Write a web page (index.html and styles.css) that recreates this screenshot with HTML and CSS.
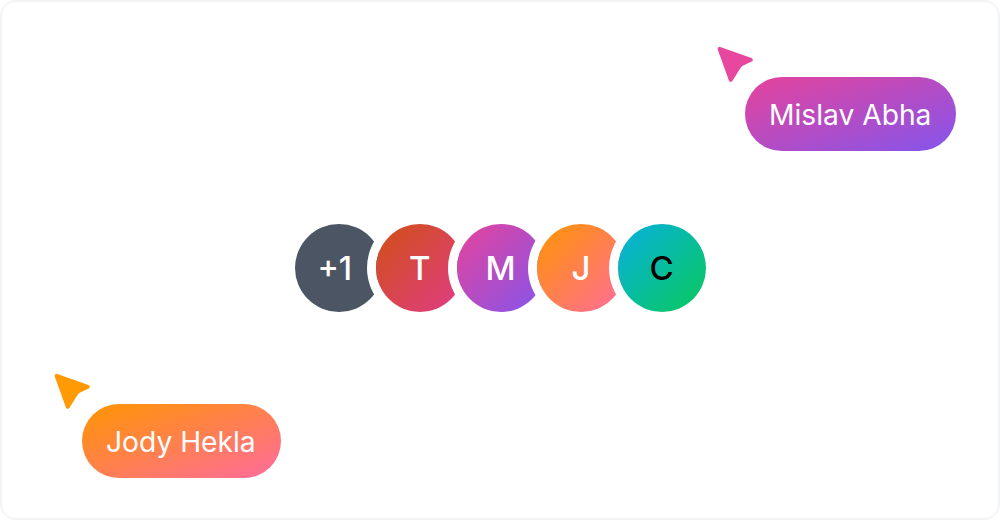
FILE: index.html
```html
<!DOCTYPE html>
<html lang="en">
<head>
  <meta charset="UTF-8" />
  <meta name="viewport" content="width=device-width, initial-scale=1.0"/>
  <title>Avatar Stack</title>
  <link rel="stylesheet" href="styles.css">
</head>
<body>
  <div class="card">
    <div class="avatars">
      <div class="avatar slate">+1</div>
      <div class="avatar red">T</div>
      <div class="avatar purple">M</div>
      <div class="avatar orange">J</div>
      <div class="avatar teal">C</div>
    </div>

    <!-- Live cursors -->
    <div class="cursor cursor-mislav">
      <svg class="pointer pointer-pink" viewBox="0 0 38 38" width="38" height="38">
        <path d="M3.6 3.8 L34.8 14.8 L26.5 18.6 Q23.6 20.2 22 23.2 L14.8 34.8 Z" />
      </svg>
      <div class="pill purple">Mislav Abha</div>
    </div>

    <div class="cursor cursor-jody">
      <svg class="pointer pointer-amber" viewBox="0 0 38 38" width="38" height="38">
        <path d="M3.6 3.8 L34.8 14.8 L26.5 18.6 Q23.6 20.2 22 23.2 L14.8 34.8 Z" />
      </svg>
      <div class="pill orange">Jody Hekla</div>
    </div>
  </div>
</body>
</html>
```

FILE: styles.css
```css
html, body {
  margin: 0;
  height: 100%;
}

body {
  font-family: Inter, "Liberation Sans", sans-serif;
  background-color: #ffffff;
}

.card {
  position: relative;
  box-sizing: border-box;
  height: 520px;
  padding-top: 16px;
  display: flex;
  justify-content: center;
  align-items: center;
  background-color: #ffffff;
  border: 2px solid #f3f4f6;
  border-radius: 16px;
  overflow: hidden;
}

.avatars {
  display: flex;
  margin-left: 1px;
}

.avatar {
  width: 88px;
  height: 88px;
  flex: none;
  display: flex;
  justify-content: center;
  align-items: center;
  border-radius: 50%;
  box-shadow: 0 0 0 9px #ffffff;
  color: #ffffff;
  font-size: 33px;
  font-weight: 500;
  position: relative;
}

.avatar + .avatar {
  margin-left: -7.4px;
}

.slate {
  background: #4b5563;
  box-shadow: none;
  padding-right: 9px;
  box-sizing: border-box;
  font-size: 32px;
}

.red {
  background: linear-gradient(to bottom right, #d04f14, #e03c88);
}

.purple {
  background: linear-gradient(to bottom right, #e6439b, #8455ec);
}

.orange {
  background: linear-gradient(to bottom right, #ff9500, #ff6b9d);
}

.teal {
  background: linear-gradient(to bottom right, #06b0e0, #0ac95a);
  color: #000000;
}

.cursor {
  position: absolute;
  display: flex;
  flex-direction: column;
  align-items: flex-start;
}

.cursor-mislav {
  left: 714px;
  top: 43px;
}

.cursor-jody {
  left: 51px;
  top: 370px;
}

.pointer {
  display: block;
  margin-bottom: -6px;
}

.pointer path {
  stroke-width: 4;
  stroke-linejoin: round;
}

.pointer-pink path {
  fill: #e8479f;
  stroke: #e8479f;
}

.pointer-amber path {
  fill: #ff9a05;
  stroke: #ff9a05;
}

.pill {
  box-sizing: border-box;
  margin-left: 29px;
  padding: 2px 25px 0 24px;
  height: 74px;
  display: flex;
  align-items: center;
  border-radius: 37px;
  color: #ffffff;
  font-size: 28.2px;
  white-space: nowrap;
}
```
